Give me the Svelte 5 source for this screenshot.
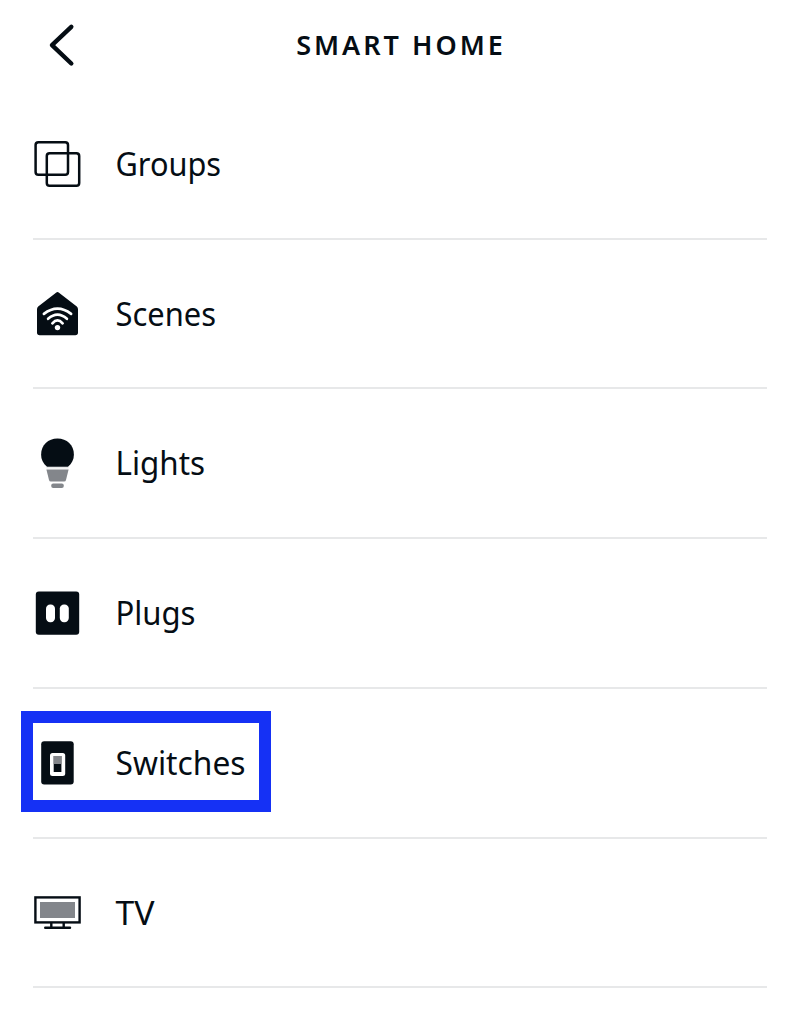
<script>
  const items = [
    { name: 'Groups', width: 105.5 },
    { name: 'Scenes', width: 100.5 },
    { name: 'Lights', width: 89.5 },
    { name: 'Plugs', width: 80 },
    { name: 'Switches', width: 130, selected: true },
    { name: 'TV', width: 39 },
  ];
</script>

<main>
  <header>
    <button aria-label="Back">
      <svg width="30" height="50" viewBox="0 0 30 50"><path d="M23.3 6.8 4 25.2 23.3 43.5" fill="none" stroke="#050d14" stroke-width="4.4" stroke-linecap="round" stroke-linejoin="round" /></svg>
    </button>
    <h1>SMART HOME</h1>
  </header>
  <ul>
    {#each items as item}
      <li class:selected={item.selected}>
        <svg class="icon" width="50" height="50" viewBox="0 0 50 50">
          {#if item.name === 'Groups'}
            <g fill="none" stroke="#050d14" stroke-width="2.5">
              <rect x="2.6" y="3.2" width="32.4" height="32.6" rx="2.8" />
              <rect x="13.8" y="14.2" width="32.4" height="32.6" rx="2.8" />
            </g>
          {:else if item.name === 'Scenes'}
            <path d="M23 3.7 Q24.5 2.5 26 3.7 L43.8 17.6 Q45 18.6 45 20.2 V43.6 Q45 46.3 42.3 46.3 H6.7 Q4 46.3 4 43.6 V20.2 Q4 18.6 5.2 17.6 Z" fill="#050d14" />
            <g fill="none" stroke="#fff" stroke-width="2.7" stroke-linecap="round">
              <path d="M10.9 24.9 Q24.5 14.5 38.1 24.9" />
              <path d="M15.1 29.8 Q24.5 21.5 33.9 29.8" />
              <path d="M19.4 34.3 Q24.5 28.5 29.6 34.3" />
            </g>
            <circle cx="24.5" cy="38.6" r="2.7" fill="#fff" />
          {:else if item.name === 'Lights'}
            <path d="M14 28.7 C10.2 25.5 8.1 21.5 8.1 16.7 C8.1 7 15.2.6 24.5.6 S40.9 7 40.9 16.7 C40.9 21.5 38.8 25.5 35 28.7 Z" fill="#050d14" />
            <path d="M13.4 31.5 H35.6 L33 42 Q32.7 43.5 31 43.5 H18 Q16.3 43.5 16 42 Z" fill="#83868b" />
            <path d="M13.5 29.8 H35.5" stroke="#d4d6d8" stroke-width=".8" />
            <rect x="18.2" y="45.5" width="12.6" height="4.4" rx="2" fill="#83868b" />
          {:else if item.name === 'Plugs'}
            <rect x="2.8" y="3.4" width="43.4" height="43.3" rx="3" fill="#050d14" />
            <rect x="13" y="16.4" width="9" height="17.8" rx="4.2" fill="#fff" />
            <rect x="26.8" y="16.4" width="9" height="17.8" rx="4.2" fill="#fff" />
          {:else if item.name === 'Switches'}
            <rect x="8.2" y="3.2" width="32.5" height="43.2" rx="3" fill="#050d14" />
            <rect x="17" y="15" width="15.2" height="23" rx="2.5" fill="#fff" />
            <rect x="20.7" y="18" width="7.7" height="16" fill="#050d14" />
            <rect x="20.7" y="18" width="7.7" height="8" fill="#83868b" />
          {:else}
            <g fill="none" stroke="#050d14" stroke-width="2.4">
              <rect x="2.4" y="9.4" width="44.2" height="25" />
              <path d="M18.3 34.4 V39.5 M30.7 34.4 V39.5" />
              <path d="M12.2 39.8 H37" stroke-linecap="round" />
            </g>
            <rect x="7" y="14" width="35" height="16" fill="#83868b" />
          {/if}
        </svg>
        <svg class="label" width="140" height="50" viewBox="0 0 140 50">
          <text x="0.5" y="37.2" textLength={item.width} lengthAdjust="spacingAndGlyphs">{item.name}</text>
        </svg>
      </li>
    {/each}
  </ul>
</main>

<style>
  :global(body) { margin: 0; background: #fff; }
  main {
    width: 800px;
    height: 1011px;
    overflow: hidden;
    background: #fff;
    color: #050d14;
    font-family: "Noto Sans", "Open Sans", sans-serif;
  }
  header {
    height: 89.8px;
    display: grid;
    grid-template-columns: 80px 1fr 80px;
    align-items: start;
  }
  button { margin: 20px 0 0 48px; width: 30px; padding: 0; border: 0; background: none; }
  button svg { display: block; }
  h1 {
    margin: 27px 0 0 2px;
    font-size: 27px;
    line-height: 36px;
    font-weight: 600;
    letter-spacing: 3px;
    text-align: center;
    white-space: nowrap;
  }
  ul { list-style: none; margin: 0 33px; padding: 0; }
  li {
    position: relative;
    box-sizing: border-box;
    height: 149.75px;
    padding-top: 49.2px;
    border-bottom: 2px solid #e7e8e9;
    display: flex;
    align-items: flex-start;
    gap: 32px;
  }
  .icon, .label { display: block; overflow: visible; }
  text { font-size: 32.5px; fill: #050d14; }
  .selected::before {
    content: "";
    position: absolute;
    left: -12px;
    top: 22px;
    width: 226px;
    height: 77px;
    border: 12.5px solid #1531f5;
  }
</style>
